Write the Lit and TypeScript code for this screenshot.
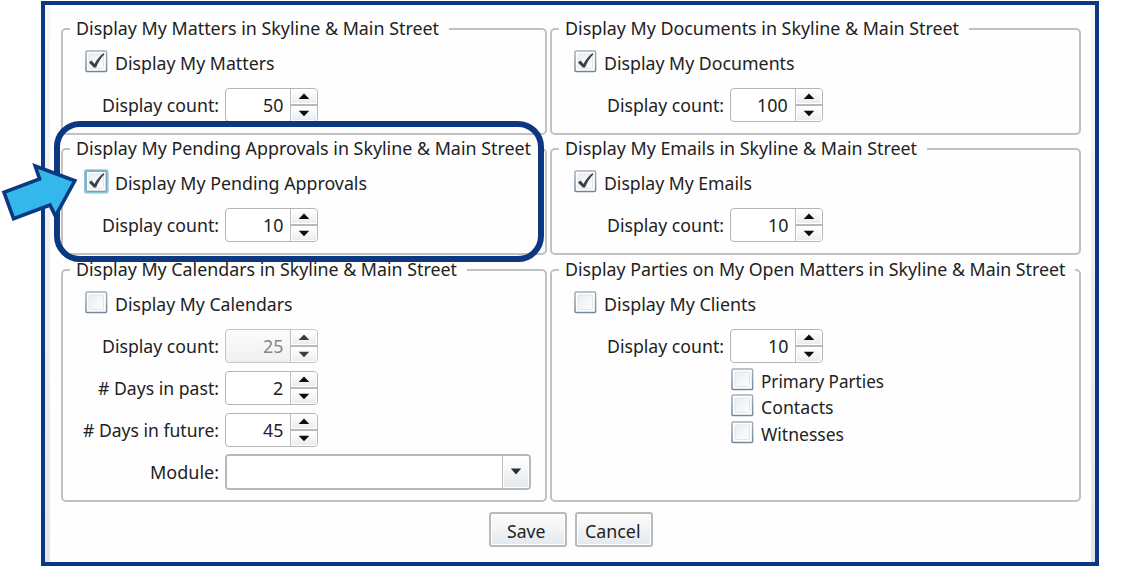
import { LitElement, html, css, svg, nothing } from "lit";
import { customElement, property } from "lit/decorators.js";

/* A run of text condensed or widened so that it fills a given width. */
@customElement("fit-text")
class FitText extends LitElement {
  @property() text = "";
  @property({ type: Number }) width = 0;
  static styles = css`
    :host { display: inline-block; white-space: pre; text-align: left; }
    span { display: inline-block; transform-origin: 0 50%; }
  `;
  updated() {
    const span = this.renderRoot.querySelector("span") as HTMLElement;
    span.style.transform = "none";
    const natural = span.getBoundingClientRect().width;
    if (this.width && natural) {
      this.style.width = `${this.width}px`;
      span.style.transform = `scaleX(${this.width / natural})`;
    }
  }
  render() {
    return html`<span>${this.text}</span>`;
  }
}

@customElement("check-box")
class CheckBox extends LitElement {
  @property() label = "";
  @property({ type: Number }) width = 0;
  @property({ type: Boolean }) checked = false;
  @property({ type: Boolean }) focused = false;
  static styles = css`
    :host { display: flex; align-items: flex-start; gap: 7px; height: 26px; line-height: 26px; }
    .box { display: block; width: 24px; height: 24px; margin: -1px 0 0 -1px; flex: none; overflow: visible; }
  `;
  render() {
    return html`
      <svg class="box" viewBox="0 0 24 24">
        <defs>
          <linearGradient id="edge" x1="0" y1="0" x2="0" y2="1">
            <stop offset="0" stop-color="#a3afbb" /><stop offset="1" stop-color="#74879a" />
          </linearGradient>
          <linearGradient id="face" x1="0" y1="0" x2="1" y2="1">
            <stop offset="0" stop-color="#e9eef4" /><stop offset="1" stop-color="#fcfdfe" />
          </linearGradient>
        </defs>
        ${this.focused
          ? svg`<rect x="0" y="0.3" width="24.6" height="24.2" rx="2.5" fill="#8cc6da" />
                <rect x="2.2" y="2.2" width="20" height="20" rx="1" fill="#fff" stroke="#5f8fa8" stroke-width="1" />`
          : svg`<rect x="2" y="2" width="20.6" height="20.6" rx="1" fill="#fff" stroke="url(#edge)" stroke-width="1.5" />`}
        <rect x="5" y="5" width="14.5" height="14.5" rx="1" fill="url(#face)" stroke="#e0e5ea" stroke-width="1" />
        ${this.checked
          ? svg`<path d="M5 13.4 L7.4 11.6 L10.5 15 C13 10.4 15.6 6.8 19.4 4.2 L20.6 5 C16.8 8.8 14.4 13 12.1 18.4 L9.8 18.4 Z" fill="#3d3d3d" />`
          : nothing}
      </svg>
      <fit-text .text=${this.label} .width=${this.width}></fit-text>
    `;
  }
}

@customElement("number-spinner")
class NumberSpinner extends LitElement {
  @property() value = "";
  @property({ type: Boolean, reflect: true }) disabled = false;
  static styles = css`
    :host {
      display: flex; box-sizing: border-box; width: 93.5px; height: 34px;
      border: 1.5px solid #b5b5b5; border-radius: 4px; background: #fff; overflow: hidden;
    }
    .value {
      flex: 1; text-align: right; padding: 0 7px 0 0; line-height: 32px; color: #222;
      border-right: 1.5px solid #bdbdbd;
    }
    .buttons { display: flex; flex-direction: column; gap: 2px; width: 26px; background: #b9b9b9; }
    .button {
      flex: 1; display: flex; align-items: center; justify-content: center;
      background: linear-gradient(#fff, #e9edf0); border: 1px solid #fff;
    }
    .button svg { display: block; width: 12px; height: 7px; fill: #0c0c0c; }
    :host([disabled]) { background: linear-gradient(#fcfcfc, #eff0f1); border-color: #c4c4c4; }
    :host([disabled]) .value { color: #858585; }
    :host([disabled]) .button svg { fill: #3c3c3c; }
  `;
  render() {
    return html`
      <div class="value"><fit-text .text=${this.value} .width=${this.value.length * 10.2}></fit-text></div>
      <div class="buttons">
        <div class="button"><svg viewBox="0 0 12 7"><path d="M6 0.5 L11.3 6 H0.7 Z" /></svg></div>
        <div class="button"><svg viewBox="0 0 12 7"><path d="M6 6.3 L11.3 0.8 H0.7 Z" /></svg></div>
      </div>
    `;
  }
}

@customElement("app-root")
class AppRoot extends LitElement {
  static styles = css`
    :host {
      display: block; position: relative; box-sizing: border-box; width: 1131px; height: 567px;
      padding: 1px 32px 1px 41px; overflow: hidden; background: #fff; color: #222;
      font-family: "Noto Sans", "Open Sans", sans-serif; font-size: 18.4px;
    }
    .frame {
      display: flex; box-sizing: border-box; height: 565px; border: 4px solid #0c3881;
    }
    .edge { width: 5px; background: linear-gradient(#f5f7f9, #e3e6e9); }
    .window { flex: 1; padding: 12px 10px 0 11px; background: #fefefe; }
    .groups {
      display: grid; grid-template-columns: 486px 531px; grid-template-rows: 118px 118px 244.6px;
      column-gap: 3px; row-gap: 2.3px;
    }
    fieldset {
      box-sizing: border-box; min-width: 0; margin: 0; padding: 9px 0 0;
      border: 2px solid #c1c1c1; border-radius: 5px;
    }
    legend { height: 21px; line-height: 21px; margin-left: 7px; padding: 0 10px 3px 6px; white-space: nowrap; }
    .check { margin-left: 22px; }
    .wide .check { margin-left: 22.5px; }
    .fields { display: grid; grid-template-columns: 156.5px 1fr; column-gap: 5.5px; row-gap: 8.2px; padding-top: 12px; }
    .wide .fields { grid-template-columns: 172.5px 1fr; }
    .label { text-align: right; line-height: 34px; height: 34px; box-sizing: border-box; }
    .combo {
      display: flex; box-sizing: border-box; width: 306px; height: 36px; margin-top: -1.4px;
      border: 2px solid #b9b9b9; border-radius: 4px; overflow: hidden;
    }
    .combo-value { flex: 1; border-right: 1.5px solid #bbb; background: #fff; }
    .combo-arrow {
      display: flex; align-items: center; justify-content: center; width: 26px; box-sizing: border-box;
      border: 1px solid #fff; background: linear-gradient(#fff, #e4e9ec);
    }
    .combo-arrow svg { width: 12px; height: 7px; fill: #2d2d2d; }
    .options { display: grid; row-gap: 0.6px; padding: 5px 0 0 179px; }
    .actions { display: flex; justify-content: center; gap: 8px; padding: 10px 0 0; }
    .action {
      display: flex; justify-content: center; box-sizing: border-box; width: 78px; height: 35px;
      line-height: 33px; border: 2px solid #bababa; border-radius: 3px;
      background: linear-gradient(#fdfdfd, #e4e9ed); box-shadow: inset 0 0 0 1px #fff;
    }
    .action fit-text { margin-right: 2px; }
    .highlight {
      position: absolute; left: 54px; top: 121px; width: 490px; height: 141px; box-sizing: border-box;
      border: 6px solid #0c3881; border-radius: 26px;
    }
    .pointer { position: absolute; left: 0; top: 156px; width: 82px; height: 68px; }
  `;

  row(label: string, width: number, value: string, disabled = false) {
    return html`
      <div class="label"><fit-text .text=${label} .width=${width}></fit-text></div>
      <number-spinner .value=${value} ?disabled=${disabled}></number-spinner>
    `;
  }

  group(title: string, titleWidth: number, label: string, labelWidth: number, wide: boolean, checked: boolean, rows: unknown, extra: unknown = nothing, focused = false) {
    return html`
      <fieldset class=${wide ? "wide" : ""}>
        <legend><fit-text .text=${title} .width=${titleWidth}></fit-text></legend>
        <check-box class="check" .label=${label} .width=${labelWidth} .checked=${checked} .focused=${focused}></check-box>
        <div class="fields">${rows}</div>
        ${extra}
      </fieldset>
    `;
  }

  render() {
    const place = " in Skyline & Main Street";
    const count = "Display count:";
    return html`
      <div class="frame">
        <div class="edge"></div>
        <div class="window">
          <div class="groups">
            ${this.group("Display My Matters" + place, 363, "Display My Matters", 159.5, false, true, this.row(count, 117, "50"))}
            ${this.group("Display My Documents" + place, 394, "Display My Documents", 190.5, true, true, this.row(count, 117, "100"))}
            ${this.group("Display My Pending Approvals" + place, 455, "Display My Pending Approvals", 252, false, true, this.row(count, 117, "10"), nothing, true)}
            ${this.group("Display My Emails" + place, 352, "Display My Emails", 148, true, true, this.row(count, 117, "10"))}
            ${this.group("Display My Calendars" + place, 381, "Display My Calendars", 177.5, false, false, html`
              ${this.row(count, 117, "25", true)}
              ${this.row("# Days in past:", 121, "2")}
              ${this.row("# Days in future:", 136, "45")}
              <div class="label"><fit-text text="Module:" width="69"></fit-text></div>
              <div class="combo">
                <div class="combo-value"></div>
                <div class="combo-arrow"><svg viewBox="0 0 12 7"><path d="M6 6.6 L11.2 0.6 H0.8 Z" /></svg></div>
              </div>
            `)}
            ${this.group("Display Parties on My Open Matters" + place, 500.5, "Display My Clients", 152, true, false, this.row(count, 117, "10"), html`
              <div class="options">
                <check-box label="Primary Parties" width="123"></check-box>
                <check-box label="Contacts" width="72.5"></check-box>
                <check-box label="Witnesses" width="83"></check-box>
              </div>
            `)}
          </div>
          <div class="actions">
            <div class="action"><fit-text text="Save" width="38.5"></fit-text></div>
            <div class="action"><fit-text text="Cancel" width="55.5"></fit-text></div>
          </div>
        </div>
        <div class="edge"></div>
      </div>
      <div class="highlight"></div>
      <svg class="pointer" viewBox="0 156 82 68">
        <path d="M74.8 180.8 L35.2 166 L39.6 179 L4 192.4 L13.6 218.6 L50 205 L55.4 216 Z"
          fill="#34b8eb" stroke="#0c3881" stroke-width="3.6" stroke-miterlimit="10" />
      </svg>
    `;
  }
}
